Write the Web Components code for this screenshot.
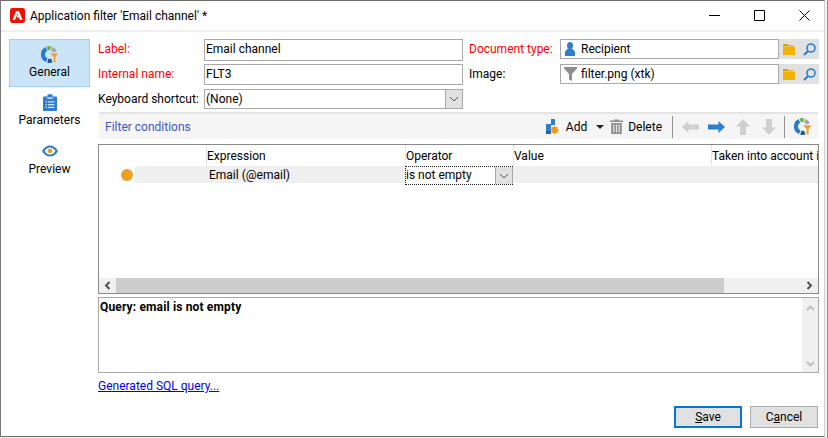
<!DOCTYPE html>
<html lang="en">
<head>
<meta charset="utf-8">
<title>Application filter</title>
<style>
  html, body { margin: 0; padding: 0; background: #f3f3f3; }
  body { font: 12px/16px Roboto, "Noto Sans", sans-serif; color: #000; width: 828px; height: 438px; box-sizing: border-box; border-right: 1px solid #8c8c8c; overflow: hidden; }
</style>
</head>
<body>
<filter-dialog>
  <title-bar slot="title">Application filter 'Email channel' *</title-bar>
  <side-nav slot="nav">
    <nav-item icon="ring" selected>General</nav-item>
    <nav-item icon="clipboard">Parameters</nav-item>
    <nav-item icon="eye">Preview</nav-item>
  </side-nav>
  <filter-form slot="form"></filter-form>
  <filter-toolbar slot="toolbar"></filter-toolbar>
  <condition-table slot="table"></condition-table>
  <query-box slot="query">Query: email is not empty</query-box>
  <dialog-footer slot="footer"></dialog-footer>
</filter-dialog>

<script>
// shared svg icons, all inline so nothing hits the network
const ICONS = {
  ring: `<svg width="18" height="17" viewBox="0 0 18 17" style="display:block">
    <g fill="none" stroke-width="4">
      <path d="M5.4 2.9A6.2 6.2 0 0 0 5.8 14.2" stroke="#2a7cc7"/>
      <path d="M6.8 14.7A6.2 6.2 0 0 0 10.8 14.4" stroke="#1c5a98"/>
      <path d="M6.2 2.3A6.2 6.2 0 0 1 9.6 2.200" stroke="#6cb33f"/>
      <path d="M10.6 2.500A6.2 6.2 0 0 1 14 6" stroke="#a8a8a8"/>
    </g>
    <path d="M8.4 7H18L14.900 11V16.800H12.200V11Z" fill="#f0a22a" stroke="#fff" stroke-width=".5"/>
  </svg>`,
  clipboard: `<svg width="14" height="17" viewBox="0 0 14 17" style="display:block">
    <path d="M1 2.5H4.4V1.6C4.4.8 5 .3 5.6.3H8.4C9 .3 9.6.8 9.6 1.6V2.5H13C13.5 2.5 14 3 14 3.5V16C14 16.6 13.5 17 13 17H1C.5 17 0 16.6 0 16V3.5C0 3 .5 2.5 1 2.5Z" fill="#2c7fd0"/>
    <path d="M4.2 3.4H9.8V4.6H4.2Z" fill="#fff"/>
    <path d="M2.6 7.2H4V8.4H2.6ZM5 7.2H11.4V8.4H5ZM2.6 10H4V11.2H2.6ZM5 10H11.4V11.2H5ZM2.6 12.8H4V14H2.6ZM5 12.8H11.4V14H5Z" fill="#cfe3f7"/>
  </svg>`,
  eye: `<svg width="16" height="12" viewBox="0 0 16 12" style="display:block">
    <path d="M0 6C2 2.2 5 .4 8 .4S14 2.2 16 6C14 9.8 11 11.6 8 11.6S2 9.8 0 6Z" fill="#2c7fd0"/>
    <path d="M2.6 6C4 3.6 6 2.4 8 2.4S12 3.6 13.4 6C12 8.4 10 9.6 8 9.6S4 8.4 2.6 6Z" fill="#fff"/>
    <circle cx="8" cy="6" r="2.3" fill="#f0961e"/>
  </svg>`,
  person: `<svg width="12" height="14" viewBox="0 0 12 14" style="display:block">
    <ellipse cx="6" cy="3.6" rx="3" ry="3.5" fill="#2c7fd0"/>
    <path d="M4 6.6H8L11 9.5V14H1V9.5Z" fill="#2c7fd0"/>
  </svg>`,
  funnel: `<svg width="13" height="14" viewBox="0 0 13 14" style="display:block">
    <path d="M0 0H13V1.5L8 7V14L5 12.6V7L0 1.5Z" fill="#8f8f8f"/>
  </svg>`,
  folder: `<svg width="12" height="11" viewBox="0 0 12 11" style="display:block">
    <path d="M0 1C0 .4.4 0 1 0H4.6L5.6 1.2H10V2.2H0Z" fill="#dca400"/>
    <path d="M0 2.6H12V11H0Z" fill="#f0b400"/>
  </svg>`,
  lens: `<svg width="13" height="13" viewBox="0 0 13 13" style="display:block">
    <circle cx="8" cy="5" r="4" fill="none" stroke="#2c7fd0" stroke-width="1.6"/>
    <path d="M5 8L1 12" stroke="#2c7fd0" stroke-width="2.2"/>
  </svg>`,
  add: `<svg width="13" height="16" viewBox="0 0 13 16" style="display:block">
    <path d="M0 5L5 5V0H9V6H5V12H0Z" fill="#2c7fd0"/>
    <path d="M0 12H5V15H0Z" fill="#1f66ad"/>
    <circle cx="8.6" cy="11" r="3.2" fill="#f0961e"/>
    <path d="M8.6 6.6V15.4M4.2 11H13M5.5 7.9L11.7 14.1M11.7 7.9L5.5 14.1" stroke="#f0961e" stroke-width="1"/>
  </svg>`,
  trash: `<svg width="13" height="15" viewBox="0 0 13 15" style="display:block">
    <path d="M4.5 1.5V.5H8.5V1.5H13V3H0V1.5Z" fill="#8c8c8c"/>
    <path d="M1.2 4H11.8V15H1.2Z" fill="#8c8c8c"/>
    <path d="M3.2 5.5H4.4V13.5H3.2ZM5.9 5.5H7.1V13.5H5.9ZM8.6 5.5H9.8V13.5H8.6Z" fill="#e6e6e6"/>
  </svg>`,
  left: `<svg width="17" height="12" viewBox="0 0 17 12" style="display:block"><path d="M0 6L6.5 0V3.5H17V8.5H6.5V12Z" fill="COLOR"/></svg>`,
  right: `<svg width="17" height="12" viewBox="0 0 17 12" style="display:block"><path d="M17 6L10.5 0V3.5H0V8.5H10.5V12Z" fill="COLOR"/></svg>`,
  up: `<svg width="14" height="16" viewBox="0 0 14 16" style="display:block"><path d="M7 0L14 7.5H10V16H4V7.5H0Z" fill="COLOR"/></svg>`,
  down: `<svg width="14" height="16" viewBox="0 0 14 16" style="display:block"><path d="M7 16L14 8.5H10V0H4V8.5H0Z" fill="COLOR"/></svg>`,
  adobe: `<svg width="15" height="15" viewBox="0 0 15 15" style="display:block">
    <rect width="15" height="15" rx="2.4" fill="#eb1000"/>
    <path d="M6.1 3H8.9L12.6 12H10L9 9.4H6.6L8 6.2L9 8.7Z" fill="#fff"/>
    <path d="M6.1 3L2.4 12H5L8 4.6Z" fill="#fff"/>
  </svg>`,
  chevron: `<svg width="10" height="6" viewBox="0 0 10 6" style="display:block"><path d="M1 1L5 5L9 1" fill="none" stroke="#555" stroke-width="1"/></svg>`
};

class TitleBar extends HTMLElement {
  constructor() {
    super();
    this.attachShadow({ mode: 'open' });
    this.shadowRoot.innerHTML = `
      <style>
        :host { display: flex; align-items: center; height: 31px; padding-left: 9px; background: #fff; border-bottom: 2px solid #f0f0f0; box-sizing: border-box; }
        .name { margin-left: 5px; flex: 1; font-size: 12px; color: #000; }
        .ctl { display: flex; gap: 34px; margin-right: 14px; }
        .ctl svg { display: block; }
      </style>
      ${ICONS.adobe}
      <span class="name"><slot></slot></span>
      <div class="ctl">
        <svg width="11" height="11" viewBox="0 0 11 11"><path d="M0 5.5H11" stroke="#000"/></svg>
        <svg width="11" height="11" viewBox="0 0 11 11"><path d="M.5.5H10.500V10.500H.5Z" fill="none" stroke="#000"/></svg>
        <svg width="11" height="11" viewBox="0 0 11 11"><path d="M.5.5L10.500 10.500M10.500.5L.5 10.500" stroke="#000"/></svg>
      </div>`;
  }
}

class SideNav extends HTMLElement {
  constructor() {
    super();
    this.attachShadow({ mode: 'open' });
    this.shadowRoot.innerHTML = `
      <style>:host { display: flex; flex-direction: column; width: 81px; }</style>
      <slot></slot>`;
  }
}

class NavItem extends HTMLElement {
  connectedCallback() {
    if (this.shadowRoot) return;
    this.attachShadow({ mode: 'open' });
    this.shadowRoot.innerHTML = `
      <style>
        :host { display: flex; flex-direction: column; align-items: center; height: 48px; box-sizing: border-box; border: 1px solid transparent; padding-top: 5px; font-size: 12px; color: #000; }
        :host([selected]) { background: #cce4f7; border-color: #99d1ff; }
        :host(:last-child) { margin-top: 1px; }
        .ic { height: 18px; display: flex; align-items: center; }
        .lb { margin-top: 1px; }
      </style>
      <div class="ic">${ICONS[this.getAttribute('icon')]}</div>
      <div class="lb"><slot></slot></div>`;
  }
}

class FieldInput extends HTMLElement {
  constructor() {
    super();
    this.attachShadow({ mode: 'open' });
    this.shadowRoot.innerHTML = `
      <style>
        :host { display: block; box-sizing: border-box; border: 1px solid #a9a9a9; background: #fff; padding: 0 1px; line-height: 19px; color: #000; white-space: nowrap; overflow: hidden; }
      </style>
      <slot></slot>`;
  }
}

class LinkField extends HTMLElement {
  connectedCallback() {
    if (this.shadowRoot) return;
    this.attachShadow({ mode: 'open' });
    this.shadowRoot.innerHTML = `
      <style>
        :host { display: flex; height: 20px; align-self: start; }
        .box { flex: 1; display: flex; align-items: center; box-sizing: border-box; border: 1px solid #a9a9a9; background: #fff; padding-left: 1px; }
        .ic { width: 16px; display: flex; justify-content: center; }
        .txt { margin-left: 3px; }
        .btns { width: 40px; background: #e1e1e1; display: flex; align-items: center; padding-left: 4px; box-sizing: border-box; gap: 8px; }
      </style>
      <div class="box"><span class="ic">${ICONS[this.getAttribute('icon')]}</span><span class="txt"><slot></slot></span></div>
      <div class="btns">${ICONS.folder}${ICONS.lens}</div>`;
  }
}

class FilterForm extends HTMLElement {
  constructor() {
    super();
    this.attachShadow({ mode: 'open' });
    this.shadowRoot.innerHTML = `
      <style>
        :host { display: grid; grid-template-columns: 106px 259px 97px 259px; grid-template-rows: 22px 21px 21px; row-gap: 3px; width: 721px; }
        .lb { line-height: 20px; white-space: nowrap; }
        .req { color: #f00; }
        .doc { padding-left: 6px; }
        .low { align-self: end; }
        .combo { display: flex; height: 20px; box-sizing: border-box; border: 1px solid #a9a9a9; line-height: 18px; padding-left: 1px; }
        .combo span { flex: 1; }
        .combo i { width: 16px; background: #e1e1e1; border-left: 1px solid #a9a9a9; display: flex; align-items: center; justify-content: center; }
      </style>
      <div class="lb req">Label:</div>
      <field-input>Email channel</field-input>
      <div class="lb req doc">Document type:</div>
      <link-field icon="person">Recipient</link-field>
      <div class="lb req">Internal name:</div>
      <field-input>FLT3</field-input>
      <div class="lb doc">Image:</div>
      <link-field icon="funnel">filter.png (xtk)</link-field>
      <div class="lb low">Keyboard shortcut:</div>
      <div class="combo low"><span>(None)</span><i>${ICONS.chevron}</i></div>`;
  }
}

class FilterToolbar extends HTMLElement {
  constructor() {
    super();
    this.attachShadow({ mode: 'open' });
    const off = '#cfcfcf', on = '#2c7fd0';
    this.shadowRoot.innerHTML = `
      <style>
        :host { display: flex; align-items: center; height: 27px; width: 719px; margin-left: 1px; box-sizing: border-box; background: #f5f5f5; border-top: 2px solid #e3e3e3; padding: 0 6px 0 6px; }
        .name { flex: 1; color: #4455c4; }
        .it { display: flex; align-items: center; }
        .sep { width: 1px; height: 22px; background: #909090; }
        .caret { width: 0; height: 0; border: 4px solid transparent; border-top: 4px solid #222; border-bottom: 0; }
      </style>
      <span class="name">Filter conditions</span>
      <div class="it" style="margin-right:7px">${ICONS.add}</div>
      <span>Add</span>
      <span class="caret" style="margin:0 6px 0 9px"></span>
      <div class="it" style="margin-right:5px">${ICONS.trash}</div>
      <span>Delete</span>
      <span class="sep" style="margin:0 9px 0 10px"></span>
      <div class="it" style="margin-right:9px">${ICONS.left.replace('COLOR', off)}</div>
      <div class="it" style="margin-right:11px">${ICONS.right.replace('COLOR', on)}</div>
      <div class="it" style="margin-right:12px">${ICONS.up.replace('COLOR', off)}</div>
      <div class="it" style="margin-right:8px">${ICONS.down.replace('COLOR', off)}</div>
      <span class="sep" style="margin-right:9px"></span>
      <div class="it">${ICONS.ring}</div>`;
  }
}

class ScrollBar extends HTMLElement {
  constructor() {
    super();
    this.attachShadow({ mode: 'open' });
    this.shadowRoot.innerHTML = `
      <style>
        :host { display: flex; height: 15px; background: #f0f0f0; align-items: stretch; }
        .end { width: 17px; display: flex; align-items: center; justify-content: center; }
        .thumb { width: 608px; background: #cdcdcd; }
        .rest { flex: 1; }
      </style>
      <div class="end"><svg width="7" height="9" viewBox="0 0 7 9"><path d="M5.500 1L2 4.500L5.500 8" fill="none" stroke="#505050" stroke-width="2"/></svg></div>
      <div class="thumb"></div>
      <div class="rest"></div>
      <div class="end"><svg width="7" height="9" viewBox="0 0 7 9"><path d="M1.500 1L5 4.500L1.500 8" fill="none" stroke="#505050" stroke-width="2"/></svg></div>`;
  }
}

class ConditionTable extends HTMLElement {
  constructor() {
    super();
    this.attachShadow({ mode: 'open' });
    this.shadowRoot.innerHTML = `
      <style>
        :host { display: flex; flex-direction: column; box-sizing: border-box; width: 721px; height: 150px; border: 1px solid #8a8a8a; background: #fff; overflow: hidden; }
        .body { flex: 1; overflow: hidden; }
        .grid { display: grid; grid-template-columns: 107px 199px 108px 198px 107px; grid-template-rows: 21px 17px; }
        .h { border-left: 1px solid #e5e5e5; line-height: 23px; white-space: nowrap; }
        .h.first { border-left: 0; }
        .c { background: #efefef; line-height: 18px; white-space: nowrap; }
        .dotcell { display: flex; }
        .dotcell b { width: 36px; background: #fff; display: flex; align-items: center; justify-content: flex-end; padding-right: 2px; box-sizing: border-box; }
        .dotcell b::after { content: ""; width: 12px; height: 12px; border-radius: 50%; background: #f0a020; }
        .dotcell span { flex: 1; background: #efefef; }
        .op { display: flex; position: relative; z-index: 1; height: 19px; box-sizing: border-box; background: #fff; line-height: 17px; border: 1px dotted #222; border-right: 0; }
        .op span { flex: 1; }
        .op i { width: 16px; background: #e1e1e1; border: 1px solid #a9a9a9; border-width: 0 1px 0 1px; display: flex; align-items: center; justify-content: center; }
      </style>
      <div class="body">
        <div class="grid">
          <div class="h first"></div><div class="h">Expression</div><div class="h">Operator</div><div class="h">Value</div><div class="h">Taken into account i</div>
          <div class="dotcell"><b></b><span></span></div>
          <div class="c" style="padding-left:3px">Email (@email)</div>
          <div class="c"><div class="op"><span>is not empty</span><i>${ICONS.chevron}</i></div></div>
          <div class="c"></div><div class="c"></div>
        </div>
      </div>
      <scroll-bar></scroll-bar>`;
  }
}

class QueryBox extends HTMLElement {
  constructor() {
    super();
    this.attachShadow({ mode: 'open' });
    this.shadowRoot.innerHTML = `
      <style>
        :host { display: flex; box-sizing: border-box; width: 721px; height: 76px; border: 1px solid #a9a9a9; background: #fff; }
        .t { flex: 1; font-weight: 700; padding: 1px 1px; letter-spacing: .15px; }
        .sb { width: 16px; background: #f0f0f0; display: flex; flex-direction: column; justify-content: space-between; align-items: center; padding: 7px 0 5px; box-sizing: border-box; }
      </style>
      <div class="t"><slot></slot></div>
      <div class="sb">
        <svg width="9" height="6" viewBox="0 0 9 6"><path d="M1 5L4.500 1.500L8 5" fill="none" stroke="#c0c0c0" stroke-width="2"/></svg>
        <svg width="9" height="6" viewBox="0 0 9 6"><path d="M1 1L4.500 4.500L8 1" fill="none" stroke="#c0c0c0" stroke-width="2"/></svg>
      </div>`;
  }
}

class DialogFooter extends HTMLElement {
  constructor() {
    super();
    this.attachShadow({ mode: 'open' });
    this.shadowRoot.innerHTML = `
      <style>
        :host { display: block; width: 720px; }
        a { color: #0000ee; text-decoration: underline; display: block; line-height: 16px; width: max-content; }
        .btns { display: flex; justify-content: flex-end; gap: 8px; margin-top: 12px; }
        .b { box-sizing: border-box; width: 68px; height: 22px; background: #e1e1e1; border: 1px solid #adadad; text-align: center; line-height: 20px; }
        .b.def { border: 2px solid #0078d7; line-height: 18px; }
        u { text-underline-offset: 1px; }
      </style>
      <a href="#">Generated SQL query...</a>
      <div class="btns">
        <div class="b def"><u>S</u>ave</div>
        <div class="b">C<u>a</u>ncel</div>
      </div>`;
  }
}

class FilterDialog extends HTMLElement {
  constructor() {
    super();
    this.attachShadow({ mode: 'open' });
    this.shadowRoot.innerHTML = `
      <style>
        :host { display: flex; flex-direction: column; width: 825px; height: 437px; box-sizing: border-box; background: #fff; border-top: 1px solid #6e6e6e; border-left: 1px solid #7a7a7a; border-right: 1px solid #d0d0d0; border-bottom: 1px solid #6e6e6e; }
        .cols { flex: 1; display: flex; }
        .nav { padding: 7px 0 0 8px; width: 97px; box-sizing: border-box; }
        .main { flex: 1; padding-top: 7px; display: flex; flex-direction: column; }
        .tb { display: block; margin-top: 3px; }
        .tab { display: block; margin-top: 5px; }
        .q { display: block; margin-top: 3px; }
        .f { display: block; margin-top: 5px; }
      </style>
      <slot name="title"></slot>
      <div class="cols">
        <div class="nav"><slot name="nav"></slot></div>
        <div class="main">
          <slot name="form"></slot>
          <div class="tb"><slot name="toolbar"></slot></div>
          <div class="tab"><slot name="table"></slot></div>
          <div class="q"><slot name="query"></slot></div>
          <div class="f"><slot name="footer"></slot></div>
        </div>
      </div>`;
  }
}

customElements.define('field-input', FieldInput);
customElements.define('link-field', LinkField);
customElements.define('title-bar', TitleBar);
customElements.define('side-nav', SideNav);
customElements.define('nav-item', NavItem);
customElements.define('filter-form', FilterForm);
customElements.define('filter-toolbar', FilterToolbar);
customElements.define('scroll-bar', ScrollBar);
customElements.define('condition-table', ConditionTable);
customElements.define('query-box', QueryBox);
customElements.define('dialog-footer', DialogFooter);
customElements.define('filter-dialog', FilterDialog);
</script>
</body>
</html>
